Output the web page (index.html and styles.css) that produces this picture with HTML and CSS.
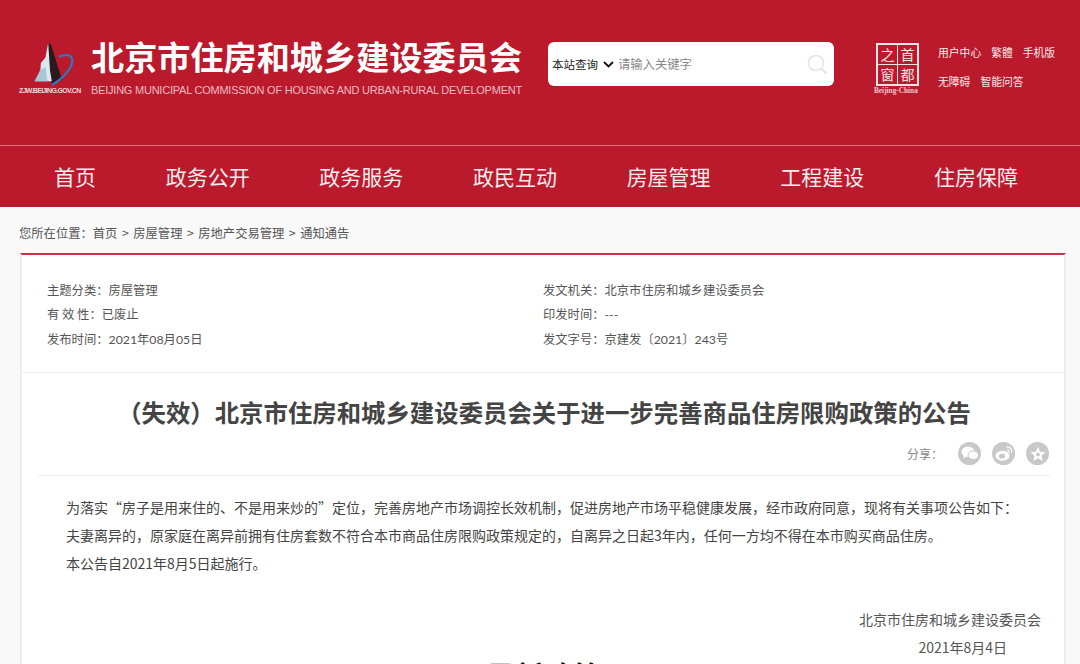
FILE: index.html
```html
<!DOCTYPE html>
<html lang="zh-CN">
  <head>
    <meta charset="UTF-8" />
    <title>北京市住房和城乡建设委员会</title>
    <link rel="stylesheet" href="styles.css">
  </head>
  <body>
    <div class="page">
      <div class="header">
        <div class="logo">
          <svg class="logo-pic" width="62" height="46" viewBox="0 0 62 46">
            <polygon points="29,0 32,1 44,40 33,46 30,30" fill="#2a1a20" />
            <polygon points="29,0 31,30 33,42 14,42 20,36 21,22 26,16" fill="#d9e9ee" />
            <polygon points="14,42 20,30 26,26 28,42" fill="#a5c8d2" />
            <path d="M33 46 C47 38 58 24 55 17 C53 12 46 13 41 15" fill="none" stroke="#2f78c4" stroke-width="2.4" />
          </svg>
          <div class="logo-url">ZJW.BEIJING.GOV.CN</div>
        </div>
        <div class="site-name">
          <div class="site-cn">北京市住房和城乡建设委员会</div>
          <div class="site-en">BEIJING MUNICIPAL COMMISSION OF HOUSING AND URBAN-RURAL DEVELOPMENT</div>
        </div>
        <div class="search">
          <span class="search-scope">本站查询</span>
          <svg class="chevron" width="11" height="7" viewBox="0 0 11 7">
            <path d="M1 1l4.5 4.5L10 1" fill="none" stroke="#111" stroke-width="1.8" />
          </svg>
          <span class="search-hint">请输入关键字</span>
          <svg class="search-icon" width="21" height="21" viewBox="0 0 21 21">
            <circle cx="9" cy="9" r="7.6" fill="none" stroke="#e4e4e4" stroke-width="1.5" />
            <path d="M14.5 14.5l5 5" stroke="#e4e4e4" stroke-width="2" />
          </svg>
        </div>
        <div class="seal-box">
          <div class="seal">
            <span>之</span><span>首</span><span>窗</span><span>都</span>
          </div>
          <div class="seal-en">Beijing-China</div>
        </div>
        <div class="tools">
          <div class="tools-row"><span>用户中心</span><span>繁體</span><span>手机版</span></div>
          <div class="tools-row"><span>无障碍</span><span>智能问答</span></div>
        </div>
      </div>

      <ul class="nav">
        <li>首页</li>
        <li>政务公开</li>
        <li>政务服务</li>
        <li>政民互动</li>
        <li>房屋管理</li>
        <li>工程建设</li>
        <li>住房保障</li>
      </ul>

      <div class="crumb">您所在位置：<a>首页</a><i>&gt;</i><a>房屋管理</a><i>&gt;</i><a>房地产交易管理</a><i>&gt;</i><a>通知通告</a></div>

      <div class="card">
        <div class="meta">
          <div class="meta-col">
            <p>主题分类：<b>房屋管理</b></p>
            <p>有 效 性：<b>已废止</b></p>
            <p>发布时间：<b>2021年08月05日</b></p>
          </div>
          <div class="meta-col">
            <p>发文机关：<b>北京市住房和城乡建设委员会</b></p>
            <p>印发时间：<b>---</b></p>
            <p>发文字号：<b>京建发〔2021〕243号</b></p>
          </div>
        </div>

        <div class="article">
          <h1>（失效）北京市住房和城乡建设委员会关于进一步完善商品住房限购政策的公告</h1>
          <div class="share">
            <span class="share-label">分享：</span>
            <span class="share-btn">
              <svg width="18" height="15" viewBox="0 0 18 15">
                <ellipse cx="7" cy="5.800" rx="6.500" ry="5.300" fill="#fff" />
                <path d="M3 9l-.8 3.400 3.600-1.800z" fill="#fff" />
                <ellipse cx="12.300" cy="9.200" rx="5.200" ry="4.300" fill="#fff" stroke="#c8c8c8" />
              </svg>
            </span>
            <span class="share-btn">
              <svg width="18" height="15" viewBox="0 0 18 15">
                <ellipse cx="7.500" cy="9.800" rx="7" ry="5" fill="#fff" />
                <ellipse cx="7" cy="10.200" rx="3" ry="2.400" fill="#c8c8c8" />
                <path d="M11.500 1c3-.5 6 2 5 6M12 4c1.500-.3 2.500 1 2 2.500" fill="none" stroke="#fff" stroke-width="1.300" />
              </svg>
            </span>
            <span class="share-btn">
              <svg width="16" height="16" viewBox="0 0 16 16">
                <path d="M8 .8l2.200 4.900 5.200.6-3.900 3.500 1.100 5.200L8 12.300 3.400 15l1.100-5.200L.6 6.300l5.200-.6z" fill="#fff" />
                <circle cx="8" cy="8.500" r="2" fill="#c8c8c8" />
              </svg>
            </span>
          </div>

          <div class="body-text">
            <p>为落实“房子是用来住的、不是用来炒的”定位，完善房地产市场调控长效机制，促进房地产市场平稳健康发展，经市政府同意，现将有关事项公告如下：</p>
            <p>夫妻离异的，原家庭在离异前拥有住房套数不符合本市商品住房限购政策规定的，自离异之日起3年内，任何一方均不得在本市购买商品住房。</p>
            <p>本公告自2021年8月5日起施行。</p>
          </div>

          <div class="sign">
            <p>北京市住房和城乡建设委员会</p>
            <p class="sign-date">2021年8月4日</p>
          </div>

          <div class="related">最新政策</div>
        </div>
      </div>
    </div>
  </body>
</html>
```

FILE: styles.css
```css
* {
  margin: 0;
  padding: 0;
  box-sizing: border-box;
}

body {
  background-color: #f9f9f9;
  font-family: "Noto Sans CJK SC", "Liberation Sans", sans-serif;
  color: #444;
}

.page {
  height: 664px;
  overflow: hidden;
}

.header {
  height: 146px;
  padding: 43px 0 0 19px;
  background-color: #bb1a2d;
  border-bottom: 1px solid #e2707c;
  display: flex;
  align-items: flex-start;
}

.logo {
  width: 62px;
  margin-right: 10px;
}

.logo-pic {
  display: block;
  height: 42px;
  overflow: visible;
}

.logo-url {
  margin-top: 2px;
  font-family: "Liberation Sans", sans-serif;
  font-size: 7px;
  line-height: 8px;
  font-weight: bold;
  letter-spacing: -0.65px;
  color: #f3d5d8;
  white-space: nowrap;
}

.site-name {
  width: 457px;
  margin-top: -3px;
}

.site-cn {
  font-size: 33.150px;
  line-height: 32px;
  font-weight: bold;
  color: #fff;
  white-space: nowrap;
}

.site-en {
  margin-top: 12px;
  font-family: "Liberation Sans", sans-serif;
  font-size: 11px;
  line-height: 13px;
  letter-spacing: -0.23px;
  color: #eebcc2;
  white-space: nowrap;
}

.search {
  width: 286px;
  height: 44px;
  padding: 0 6px 0 4px;
  background-color: #fff;
  border-radius: 6px;
  display: flex;
  align-items: center;
  margin-top: -1px;
}

.search-scope {
  font-size: 11.500px;
  color: #222;
}

.chevron {
  margin: 1px 4px 0 5px;
}

.search-hint {
  flex: 1;
  font-size: 12.300px;
  color: #888;
}

.seal-box {
  width: 46px;
  margin: 0 17px 0 41px;
}

.seal {
  width: 43px;
  height: 43px;
  margin-left: 1px;
  border: 2px solid #f6e3e5;
  background-color: #f6e3e5;
  display: grid;
  grid-template-columns: 1fr 1fr;
  gap: 1px;
}

.seal span {
  background-color: #bb1a2d;
  color: #f6e3e5;
  font-size: 14px;
  line-height: 19px;
  text-align: center;
}

.seal-en {
  margin-left: -1px;
  font-family: "Liberation Serif", serif;
  font-size: 7.300px;
  line-height: 9px;
  font-weight: bold;
  color: #f0c8cc;
  white-space: nowrap;
}

.tools {
  font-size: 10.800px;
  color: #fbe9ea;
}

.tools-row {
  height: 29px;
  line-height: 18px;
  display: flex;
  gap: 10px;
}

.nav {
  height: 61px;
  padding: 0 62px 2px 54px;
  background-color: #bb1a2d;
  list-style: none;
  display: flex;
  justify-content: space-between;
  align-items: center;
  color: #fbecee;
  font-size: 21px;
}

.crumb {
  height: 46px;
  padding: 17px 0 0 19px;
  font-size: 12.300px;
  line-height: 18px;
  color: #555;
}

.crumb i {
  margin: 0 4.500px;
  font-style: normal;
}

.card {
  width: 1046px;
  height: 420px;
  margin-left: 20px;
  background-color: #fff;
  border: 2px solid #ececec;
  border-top: 2px solid #c8313f;
  border-bottom: 0;
}

.meta {
  height: 118px;
  padding: 23px 0 0 25px;
  border-bottom: 1px solid #eee;
  display: flex;
}

.meta-col {
  width: 496px;
  font-size: 12.300px;
  line-height: 24.400px;
  color: #555;
}

.meta-col b {
  font-family: "Lato", "Noto Sans CJK SC", sans-serif;
  font-weight: normal;
  line-height: 1;
}

.meta-col p {
  white-space: nowrap;
}

.article {
  padding: 0 14px 0 16px;
}

h1 {
  margin-top: 21px;
  font-size: 24.400px;
  line-height: 36px;
  font-weight: bold;
  color: #444;
  text-align: center;
  white-space: nowrap;
}

.share {
  height: 46px;
  padding: 12px 1px 0 0;
  border-bottom: 1px solid #eee;
  display: flex;
  justify-content: flex-end;
  gap: 11px;
}

.share-label {
  width: 40px;
  font-size: 12px;
  line-height: 24px;
  color: #888;
}

.share-btn {
  width: 23px;
  height: 23px;
  border-radius: 50%;
  background-color: #c8c8c8;
  display: flex;
  align-items: center;
  justify-content: center;
}

.body-text {
  padding: 17px 0 0 28px;
  font-size: 14px;
  line-height: 28px;
  color: #444;
}

.body-text p {
  white-space: nowrap;
}

.sign {
  margin-top: 28px;
  padding-right: 9px;
  text-align: right;
  font-size: 14px;
  line-height: 28px;
  color: #555;
}

.sign-date {
  padding-right: 34px;
}

.related {
  margin-top: -2px;
  text-align: center;
  font-size: 29px;
  line-height: 32px;
  font-weight: bold;
  color: #111;
}
```
